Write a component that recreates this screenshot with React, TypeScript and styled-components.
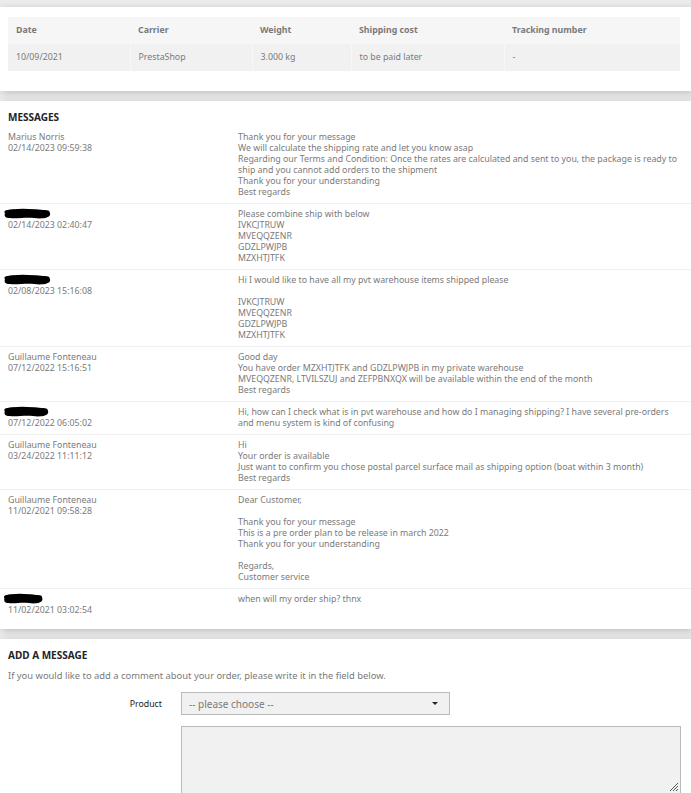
import React from 'react';
import styled, { createGlobalStyle } from 'styled-components';

const GlobalStyle = createGlobalStyle`
  body {
    margin: 0;
    background: #ececec;
    font-family: "Noto Sans", "DejaVu Sans", sans-serif;
    color: #7a7a7a;
  }
`;

const Page = styled.div`
  width: 691px;
  padding-top: 7px;
  display: flex;
  flex-direction: column;
  gap: 10px;
`;

const Card = styled.section<{ $pad?: string }>`
  background: #fff;
  box-shadow: 2px 2px 8px 0 rgba(0, 0, 0, 0.2);
  padding: ${(p) => p.$pad || '0'};
`;

const Table = styled.table`
  width: 672px;
  table-layout: fixed;
  border-collapse: collapse;
  font-size: 8.8px;
  line-height: 11px;
`;

const Th = styled.th<{ $w: number }>`
  box-sizing: border-box;
  width: ${(p) => p.$w}px;
  text-align: left;
  font-weight: 700;
  color: #7a7a7a;
  background: #f6f6f6;
  padding: 8px 8px;
  height: 27px;
`;

const Td = styled.td`
  background: #f1f1f1;
  padding: 8px 8px;
  border-left: 1px solid #f7f7f7;
  &:first-child {
    border-left: none;
  }
`;

const Heading = styled.h3`
  margin: 0;
  padding-left: 8px;
  font-size: 10px;
  line-height: 14px;
  font-weight: 700;
  color: #232323;
  text-transform: uppercase;
`;

const MessageList = styled.div`
  margin-top: 3px;
`;

const MessageRow = styled.div`
  display: grid;
  grid-template-columns: 230px 1fr;
  padding: 5px 10px 5px 8px;
  font-size: 8.8px;
  line-height: 11px;
  & + & {
    border-top: 1px solid #f0f0f0;
  }
`;

const Author = styled.div`
  display: flex;
  flex-direction: column;
`;

const Body = styled.div`
  white-space: pre-line;
`;

const Blob = styled.svg`
  display: block;
  margin-left: -6px;
  margin-top: -1px;
  height: 12px;
`;

const Intro = styled.p`
  margin: 8px 0 0;
  padding-left: 8px;
  font-size: 9.4px;
  line-height: 12px;
`;

const FormRow = styled.div`
  display: grid;
  grid-template-columns: 154px 269px;
  column-gap: 19px;
  align-items: center;
  margin-top: 10px;
  padding-left: 8px;
`;

const Label = styled.label`
  text-align: right;
  font-size: 8.8px;
  color: #232323;
`;

const Select = styled.div`
  height: 21px;
  border: 1px solid #bbb;
  background: #f1f1f1;
  display: flex;
  align-items: center;
  justify-content: space-between;
  padding: 0 11px 0 7px;
  font-size: 10px;
  color: #7a7a7a;
`;

const Caret = styled.span`
  width: 0;
  height: 0;
  border-left: 3px solid transparent;
  border-right: 3px solid transparent;
  border-top: 3px solid #232323;
`;

const TextArea = styled.div`
  position: relative;
  margin: 11px 0 0 181px;
  width: 498px;
  height: 80px;
  border: 1px solid #bbb;
  background: #f1f1f1;
`;

const Grip = styled.svg`
  position: absolute;
  right: 1px;
  bottom: 15px;
`;

type Msg = { name?: string; date: string; text: string; redact?: number };

const messages: Msg[] = [
  {
    name: 'Marius Norris',
    date: '02/14/2023 09:59:38',
    text: 'Thank you for your message\nWe will calculate the shipping rate and let you know asap\nRegarding our Terms and Condition: Once the rates are calculated and sent to you, the package is ready to ship and you cannot add orders to the shipment\nThank you for your understanding\nBest regards',
  },
  {
    date: '02/14/2023 02:40:47',
    redact: 50,
    text: 'Please combine ship with below\nIVKCJTRUW\nMVEQQZENR\nGDZLPWJPB\nMZXHTJTFK',
  },
  {
    date: '02/08/2023 15:16:08',
    redact: 50,
    text: 'Hi I would like to have all my pvt warehouse items shipped please\n\u00a0\nIVKCJTRUW\nMVEQQZENR\nGDZLPWJPB\nMZXHTJTFK',
  },
  {
    name: 'Guillaume Fonteneau',
    date: '07/12/2022 15:16:51',
    text: 'Good day\nYou have order MZXHTJTFK and GDZLPWJPB in my private warehouse\nMVEQQZENR, LTVILSZUJ and ZEFPBNXQX will be available within the end of the month\nBest regards',
  },
  {
    date: '07/12/2022 06:05:02',
    redact: 48,
    text: 'Hi, how can I check what is in pvt warehouse and how do I managing shipping? I have several pre-orders and menu system is kind of confusing',
  },
  {
    name: 'Guillaume Fonteneau',
    date: '03/24/2022 11:11:12',
    text: 'Hi\nYour order is available\nJust want to confirm you chose postal parcel surface mail as shipping option (boat within 3 month)\nBest regards',
  },
  {
    name: 'Guillaume Fonteneau',
    date: '11/02/2021 09:58:28',
    text: 'Dear Customer,\n\u00a0\nThank you for your message\nThis is a pre order plan to be release in march 2022\nThank you for your understanding\n\u00a0\nRegards,\nCustomer service',
  },
  {
    date: '11/02/2021 03:02:54',
    redact: 42,
    text: 'when will my order ship? thnx',
  },
];

function Redacted({ width }: { width: number }) {
  return (
    <Blob width={width} viewBox="0 0 50 12" preserveAspectRatio="none">
      <path
        d="M3 5 C2 2 8 1 14 2 C22 3 30 1 38 2 C46 2 49 4 48 7 C47 10 40 11 32 10 C24 9 14 11 8 10 C3 10 2 8 3 5 Z"
        fill="#000"
      />
      <path d="M4 4 C14 1 30 2 46 4" stroke="#000" strokeWidth="3" fill="none" strokeLinecap="round" />
    </Blob>
  );
}

const columns: [string, number][] = [
  ['Date', 122],
  ['Carrier', 122],
  ['Weight', 99],
  ['Shipping cost', 153],
  ['Tracking number', 176],
];

export default function App() {
  return (
    <>
      <GlobalStyle />
      <Page>
        <Card $pad="10px 11px 20px 8px">
          <Table>
            <thead>
              <tr>
                {columns.map(([label, w]) => (
                  <Th key={label} $w={w}>
                    {label}
                  </Th>
                ))}
              </tr>
            </thead>
            <tbody>
              <tr>
                <Td>10/09/2021</Td>
                <Td>PrestaShop</Td>
                <Td>3.000 kg</Td>
                <Td>to be paid later</Td>
                <Td>-</Td>
              </tr>
            </tbody>
          </Table>
        </Card>

        <Card $pad="9px 0 8px">
          <Heading>Messages</Heading>
          <MessageList>
            {messages.map((m) => (
              <MessageRow key={m.date}>
                <Author>
                  {m.redact ? <Redacted width={m.redact} /> : <span>{m.name}</span>}
                  <span>{m.date}</span>
                </Author>
                <Body>{m.text}</Body>
              </MessageRow>
            ))}
          </MessageList>
        </Card>

        <Card $pad="9px 0 0">
          <Heading>Add a message</Heading>
          <Intro>If you would like to add a comment about your order, please write it in the field below.</Intro>
          <FormRow>
            <Label>Product</Label>
            <Select>
              <span>-- please choose --</span>
              <Caret />
            </Select>
          </FormRow>
          <TextArea>
            <Grip width="10" height="10" viewBox="0 0 10 10">
              <path d="M9 1 L1 9 M9 4 L4 9 M9 7 L7 9" stroke="#555" strokeWidth="1" />
            </Grip>
          </TextArea>
        </Card>
      </Page>
    </>
  );
}
